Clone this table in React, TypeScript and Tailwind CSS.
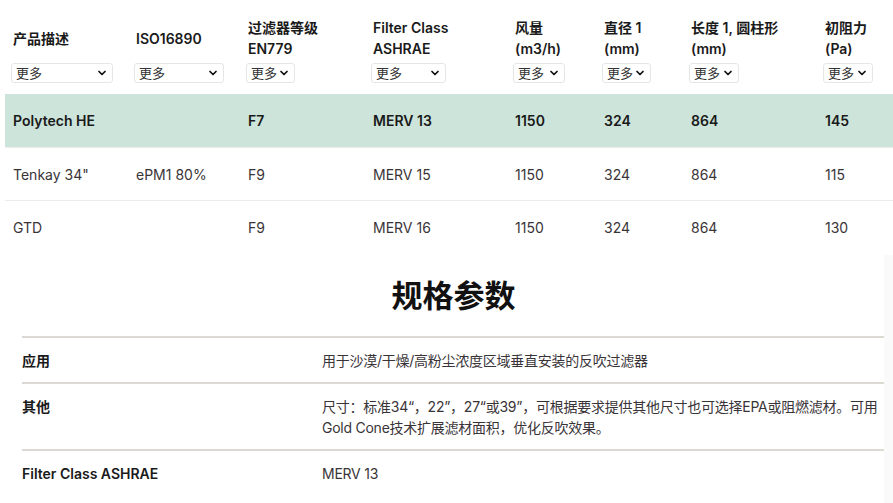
import { ChevronDown } from 'lucide-react';

const font = { fontFamily: 'Inter, "Noto Sans CJK SC", sans-serif' };

interface Col {
  title: string[];
  width: string;
  selectWidth: string;
}

const columns: Col[] = [
  { title: ['产品描述'], width: 'w-[123px]', selectWidth: 'w-[102px]' },
  { title: ['ISO16890'], width: 'w-[112px]', selectWidth: 'w-[90px]' },
  { title: ['过滤器等级', 'EN779'], width: 'w-[125px]', selectWidth: 'w-[49px]' },
  { title: ['Filter Class', 'ASHRAE'], width: 'w-[142px]', selectWidth: 'w-[75px]' },
  { title: ['风量', '(m3/h)'], width: 'w-[89px]', selectWidth: 'w-[52px]' },
  { title: ['直径 1', '(mm)'], width: 'w-[87px]', selectWidth: 'w-[49px]' },
  { title: ['长度 1, 圆柱形', '(mm)'], width: 'w-[134px]', selectWidth: 'w-[50px]' },
  { title: ['初阻力', '(Pa)'], width: 'w-[76px]', selectWidth: 'w-[50px]' },
];

const rows = [
  ['Polytech HE', '', 'F7', 'MERV 13', '1150', '324', '864', '145'],
  ['Tenkay 34"', 'ePM1 80%', 'F9', 'MERV 15', '1150', '324', '864', '115'],
  ['GTD', '', 'F9', 'MERV 16', '1150', '324', '864', '130'],
];

const specs = [
  { label: '应用', value: '用于沙漠/干燥/高粉尘浓度区域垂直安装的反吹过滤器' },
  {
    label: '其他',
    value:
      '尺寸：标准34“，22”，27“或39”，可根据要求提供其他尺寸也可选择EPA或阻燃滤材。可用Gold Cone技术扩展滤材面积，优化反吹效果。',
  },
  { label: 'Filter Class ASHRAE', value: 'MERV 13' },
];

function MoreSelect({ width }: { width: string }) {
  return (
    <div
      className={`${width} -ml-[2px] h-[20px] flex items-center justify-between rounded-[3px] border border-[#e6e6e6] bg-white pl-[4px] pr-[4px] text-[13px] text-[#333]`}
    >
      <span style={{ fontFamily: '"Noto Sans CJK SC", sans-serif' }}>更多</span>
      <ChevronDown size={12} strokeWidth={3.5} className="text-[#111]" />
    </div>
  );
}

export default function App() {
  return (
    <div className="relative w-[893px] h-[503px] overflow-hidden bg-white text-[#222]" style={font}>
      <div className="absolute right-0 top-[255px] h-[248px] w-[9px] bg-[#fafafa]" />

      <div className="pl-[5px]">
        <div className="flex pt-[16px] pb-[11px]">
          {columns.map((c, i) => (
            <div key={i} className={`${c.width} shrink-0 pl-[8px]`}>
              <div className="h-[44px] flex flex-col justify-center text-[14px] font-semibold leading-[21px] text-[#1a1a1a]">
                {c.title.map((t) => (
                  <div key={t} className="whitespace-nowrap">{t}</div>
                ))}
              </div>
              <div className="mt-[3px]">
                <MoreSelect width={c.selectWidth} />
              </div>
            </div>
          ))}
        </div>

        {rows.map((r, ri) => (
          <div
            key={ri}
            className={`flex h-[53px] items-center text-[14px] ${
              ri === 0 ? 'h-[52px] bg-[#cde4da] font-semibold text-[#1a1a1a]' : 'border-t border-[#ececec] text-[#3a3438]'
            }`}
          >
            {r.map((v, ci) => (
              <div key={ci} className={`${columns[ci].width} shrink-0 pl-[8px] whitespace-nowrap`}>
                {v}
              </div>
            ))}
          </div>
        ))}
      </div>

      <h2
        className="mt-[21px] pl-[14px] text-center text-[31px] font-bold leading-[40px] text-[#111]"
        style={{ fontFamily: '"Noto Sans CJK SC", sans-serif' }}
      >
        规格参数
      </h2>

      <div className="mx-[22px] mt-[22px] w-[862px] border-t-2 border-[#dcd9d2]">
        {specs.map((s, i) => (
          <div
            key={s.label}
            className={`flex pt-[12px] pb-[11px] text-[14px] leading-[21px] ${
              i < specs.length - 1 ? 'border-b-2 border-[#dcd9d2]' : ''
            }`}
          >
            <div className="w-[300px] shrink-0 font-semibold text-[#1a1a1a]">{s.label}</div>
            <div className="w-[564px] shrink-0 tracking-[-0.25px] text-[#3a3438]">{s.value}</div>
          </div>
        ))}
      </div>
    </div>
  );
}
